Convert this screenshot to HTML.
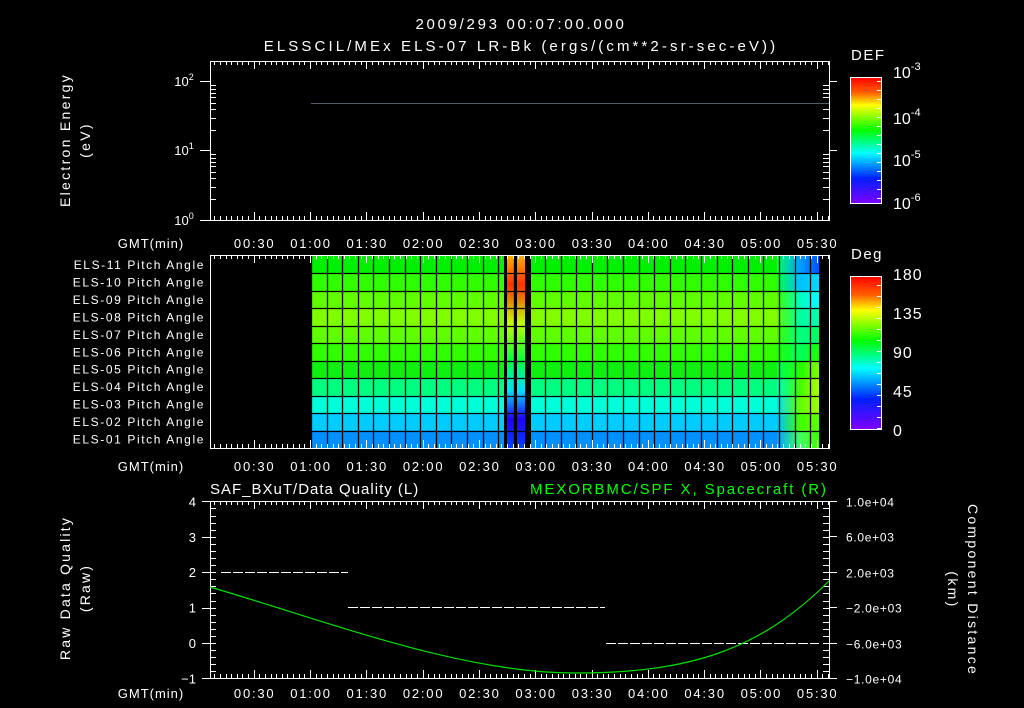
<!DOCTYPE html>
<html><head><meta charset="utf-8"><style>
html,body{margin:0;padding:0;background:#000;width:1024px;height:708px;overflow:hidden}
svg{display:block}
text{font-family:"Liberation Sans",sans-serif;fill:#fff}
</style></head><body>
<svg id="s" width="1024" height="708" xmlns="http://www.w3.org/2000/svg">
<defs>
<linearGradient id="rb" x1="0" y1="0" x2="0" y2="1">
<stop offset="0" stop-color="#ff0000"/><stop offset="0.12" stop-color="#ff6000"/>
<stop offset="0.22" stop-color="#ffff00"/><stop offset="0.42" stop-color="#00ff00"/>
<stop offset="0.6" stop-color="#00ffff"/><stop offset="0.8" stop-color="#0020ff"/>
<stop offset="1" stop-color="#8000ff"/></linearGradient>
<linearGradient id="st" x1="0" y1="0" x2="0" y2="1">
<stop offset="0" stop-color="#ffb000"/><stop offset="0.15" stop-color="#ff3000"/>
<stop offset="0.35" stop-color="#c0ff00"/><stop offset="0.55" stop-color="#00ff40"/>
<stop offset="0.7" stop-color="#00e0ff"/><stop offset="0.85" stop-color="#2000ff"/>
<stop offset="1" stop-color="#0040ff"/></linearGradient>
</defs>
<g id="g"></g>
<text x="521" y="29" font-size="15" text-anchor="middle" letter-spacing="2.7">2009/293 00:07:00.000</text>
<text x="521" y="51" font-size="15" text-anchor="middle" letter-spacing="3.1">ELSSCIL/MEx ELS-07 LR-Bk  (ergs/(cm**2-sr-sec-eV))</text>
<text x="0" y="0" font-size="14" text-anchor="middle" letter-spacing="2.3" transform="translate(70,140) rotate(-90)">Electron Energy</text>
<text x="0" y="0" font-size="14" text-anchor="middle" letter-spacing="2.3" transform="translate(90,140) rotate(-90)">(eV)</text>
<text x="0" y="0" font-size="14" text-anchor="middle" letter-spacing="2.2" transform="translate(70,588) rotate(-90)">Raw Data Quality</text>
<text x="0" y="0" font-size="14" text-anchor="middle" letter-spacing="2.2" transform="translate(90,588) rotate(-90)">(Raw)</text>
<text x="0" y="0" font-size="14" text-anchor="middle" letter-spacing="2.3" transform="translate(968,590) rotate(90)">Component Distance</text>
<text x="0" y="0" font-size="14" text-anchor="middle" letter-spacing="2.3" transform="translate(948,590) rotate(90)">(km)</text>
<text x="851" y="60" font-size="15" letter-spacing="1.5">DEF</text>
<text x="851" y="259" font-size="15" letter-spacing="1.5">Deg</text>
<text x="210" y="494" font-size="15" letter-spacing="1">SAF_BXuT/Data Quality (L)</text>
<text x="530" y="494" font-size="15" letter-spacing="1.9" style="fill:#00ff00">MEXORBMC/SPF X, Spacecraft (R)</text>
</svg>
<script>
const g=document.getElementById('g');let h='';
const X=t=>310+(t-60)*1.8767;
function R(x,y,w,hh,c){h+=`<rect x="${x}" y="${y}" width="${w}" height="${hh}" fill="${c}"/>`}
function L(x1,y1,x2,y2,c='#fff',w=1){h+=`<line x1="${x1}" y1="${y1}" x2="${x2}" y2="${y2}" stroke="${c}" stroke-width="${w}"/>`}
function T(x,y,s,sz=13,a='middle',c='#fff',ls=0){h+=`<text x="${x}" y="${y}" font-size="${sz}" text-anchor="${a}" letter-spacing="${ls}" style="fill:${c}">${s}</text>`}
const rows=['#00f000','#30ff00','#60ff00','#80ff00','#60ff00','#30ff00','#10f010','#00ff80','#00ffd8','#00ccff','#0090ff'];
const rr=[['#00ff60','#00a0ff','#0050ff'],['#00ff40','#00c0ff','#00d8ff'],['#40ff00','#00ffc0','#00ffff'],['#60ff00','#00ffa0','#00ffb0'],['#40ff00','#00ff80','#00ff60'],['#20ff00','#00ff60','#20ff00'],['#00ff60','#20ff00','#80ff00'],['#00ffc0','#40ff00','#b0ff00'],['#00e0ff','#60ff00','#a0ff00'],['#00c0ff','#40ff00','#60ff00'],['#00a0ff','#40ff60','#40ff00']];
const y0=256,rh=192/11;
let defs='';
for(let i=0;i<11;i++){const y=y0+i*rh;R(311,y,466,rh+0.5,rows[i]);
defs+=`<linearGradient id="r${i}"><stop offset="0" stop-color="${rr[i][0]}"/><stop offset="0.55" stop-color="${rr[i][1]}"/><stop offset="1" stop-color="${rr[i][2]}"/></linearGradient>`;
R(777,y,42,rh+0.5,`url(#r${i})`);}
h=`<defs>${defs}</defs>`+h;
R(507,256,9,192,'url(#st)');R(517,256,8,192,'url(#st)');
R(504,256,3,192,'#000');R(515,256,2,192,'#000');R(525,256,6,192,'#000');
for(let x=311;x<820;x+=15.6)L(Math.round(x)+0.5,256,Math.round(x)+0.5,448,'#000',1.3);
for(let i=1;i<11;i++){const y=Math.round(y0+i*rh)+0.5;L(311,y,819,y,'#000',1.3);}
const labs=['ELS-11','ELS-10','ELS-09','ELS-08','ELS-07','ELS-06','ELS-05','ELS-04','ELS-03','ELS-02','ELS-01'];
labs.forEach((l,i)=>T(205,y0+i*rh+13,l+' Pitch Angle',12,'end','#fff',1.6));
function frame(top,bot,ly){h+=`<rect x="210.5" y="${top}.5" width="619" height="${bot-top}" fill="none" stroke="#fff"/>`;
for(let t=9;t<=336;t+=3){const x=Math.round(X(t))+0.5;const m=t%30==0;L(x,top,x,top+(m?8:4));L(x,bot,x,bot-(m?8:4));}
['00:30','01:00','01:30','02:00','02:30','03:00','03:30','04:00','04:30','05:00','05:30'].forEach((s,i)=>T(X(30+30*i)+1,ly,s,13,'middle','#fff',1.8));
T(151,ly,'GMT(min)',13,'middle','#fff',1);}
frame(61,220,248);frame(255,448,471);frame(501,678,698);
[[81,'2'],[150,'1'],[220,'0']].forEach(([y,e])=>{L(200,y+.5,210,y+.5);h+=`<text x="184" y="${y+5}" font-size="13" text-anchor="middle">10<tspan dy="-6" font-size="9">${e}</tspan></text>`});
for(let d=0;d<2;d++)for(let k=2;k<10;k++){const y=Math.round(220-69*(d+Math.log10(k)))+.5;L(210,y,216,y);L(829,y,823,y);}
[81,150].forEach(y=>L(829,y+.5,837,y+.5));
L(311,103.5,829,103.5,'#505a68',1);
h+=`<rect x="850.5" y="77.5" width="31" height="126" fill="url(#rb)" stroke="#fff"/>`;
h+=`<rect x="850.5" y="276.5" width="31" height="153" fill="url(#rb)" stroke="#fff"/>`;
for(let y=81;y<204;y+=9)L(877,y+.5,881,y+.5);
for(let y=285;y<430;y+=11)L(877,y+.5,881,y+.5);
[['-3',78],['-4',124],['-5',166],['-6',209]].forEach(([e,y])=>h+=`<text x="893" y="${y}" font-size="16">10<tspan dy="-8" font-size="11">${e}</tspan></text>`);
[['180',280],['135',319],['90',358],['45',397],['0',436]].forEach(([s,y])=>T(893,y,s,16,'start','#fff',1));
const Y=v=>643-v*35.4;
[4,3,2,1,0,-1].forEach(v=>{T(196,Y(v)+5,v==-1?'\u22121':v,13,'end');L(202,Math.round(Y(v))+.5,210,Math.round(Y(v))+.5);});
for(let v=-1;v<4;v+=0.2){const y=Math.round(Y(v))+.5;L(210,y,216,y);L(829,y,823,y);}
['1.0e+04','6.0e+03','2.0e+03','\u22122.0e+03','\u22126.0e+03','\u22121.0e+04'].forEach((s,i)=>{const y=Math.round(501+i*35.4)+.5;L(829,y,837,y);T(846,y+5,s,12,'start','#fff',0.7);});
h+=`<line x1="221" y1="572.5" x2="348" y2="572.5" stroke="#fff" stroke-dasharray="10,2"/>`;
h+=`<line x1="348" y1="607.5" x2="605" y2="607.5" stroke="#fff" stroke-dasharray="10,2"/>`;
h+=`<line x1="606" y1="643.5" x2="819" y2="643.5" stroke="#fff" stroke-dasharray="10,2"/>`;
h+=`<path d="M210,587 C330,622 460,673 575,673 C690,673 760,650 829,581" fill="none" stroke="#00e000" stroke-width="1.2"/>`;
g.innerHTML=h;
</script>
</body></html>
